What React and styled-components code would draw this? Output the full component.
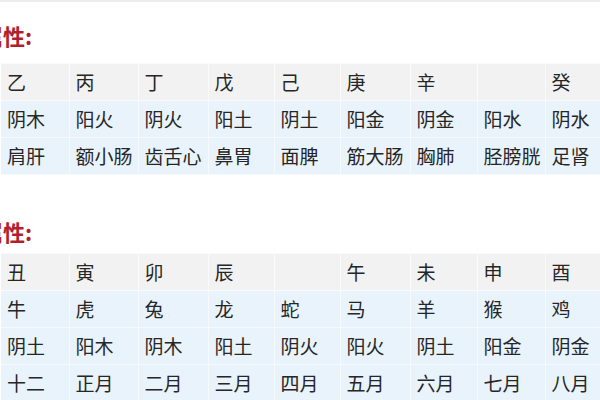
import React from 'react';
import styled, { createGlobalStyle } from 'styled-components';

const GlobalStyle = createGlobalStyle`
  html, body {
    margin: 0;
    padding: 0;
    background: #ffffff;
  }
  body {
    width: 600px;
    height: 400px;
    overflow: hidden;
    font-family: "Noto Sans CJK SC", "Noto Sans", sans-serif;
  }
`;

const Page = styled.div`
  width: 600px;
  height: 400px;
  overflow: hidden;
  background: #fff;
`;

const TopRule = styled.div`
  height: 2px;
  background: #ececec;
`;

const Title = styled.div`
  height: 30px;
  line-height: 30px;
  margin-top: ${(p) => p.top}px;
  margin-bottom: ${(p) => p.bottom}px;
  margin-left: -19px;
  font-size: 22px;
  font-weight: 700;
  color: #b11f2d;
  white-space: nowrap;
`;

const Table = styled.table`
  border-collapse: collapse;
  table-layout: fixed;
  width: 612px;
  margin-left: 1px;
`;

const Cell = styled.td`
  height: 36px;
  padding: 0 0 0 6px;
  border: 1px solid ${(p) => (p.head ? '#fafafa' : '#f6fafd')};
  background: ${(p) => (p.head ? '#f2f2f2' : '#e9f3fb')};
  color: #262626;
  font-size: 19px;
  line-height: 36px;
  white-space: nowrap;
  overflow: hidden;
  &:first-child {
    border-left: none;
  }
`;

const widths = [68, 69, 70, 66, 66, 70, 67, 68, 68];

const stems = [
  ['乙', '丙', '丁', '戊', '己', '庚', '辛', '', '癸'],
  ['阴木', '阳火', '阴火', '阳土', '阴土', '阳金', '阴金', '阳水', '阴水'],
  ['肩肝', '额小肠', '齿舌心', '鼻胃', '面脾', '筋大肠', '胸肺', '胫膀胱', '足肾'],
];

const branches = [
  ['丑', '寅', '卯', '辰', '', '午', '未', '申', '酉'],
  ['牛', '虎', '兔', '龙', '蛇', '马', '羊', '猴', '鸡'],
  ['阴土', '阳木', '阴木', '阳土', '阴火', '阳火', '阴土', '阳金', '阴金'],
  ['十二', '正月', '二月', '三月', '四月', '五月', '六月', '七月', '八月'],
];

const DataTable = ({ rows }) => (
  <Table>
    <colgroup>
      {widths.map((w, i) => (
        <col key={i} style={{ width: w }} />
      ))}
    </colgroup>
    <tbody>
      {rows.map((row, r) => (
        <tr key={r}>
          {row.map((txt, c) => (
            <Cell key={c} head={r === 0}>
              {txt}
            </Cell>
          ))}
        </tr>
      ))}
    </tbody>
  </Table>
);

export default function App() {
  return (
    <Page>
      <GlobalStyle />
      <TopRule />
      <Title top={18} bottom={13}>属性:</Title>
      <DataTable rows={stems} />
      <Title top={41} bottom={7}>属性:</Title>
      <DataTable rows={branches} />
    </Page>
  );
}
